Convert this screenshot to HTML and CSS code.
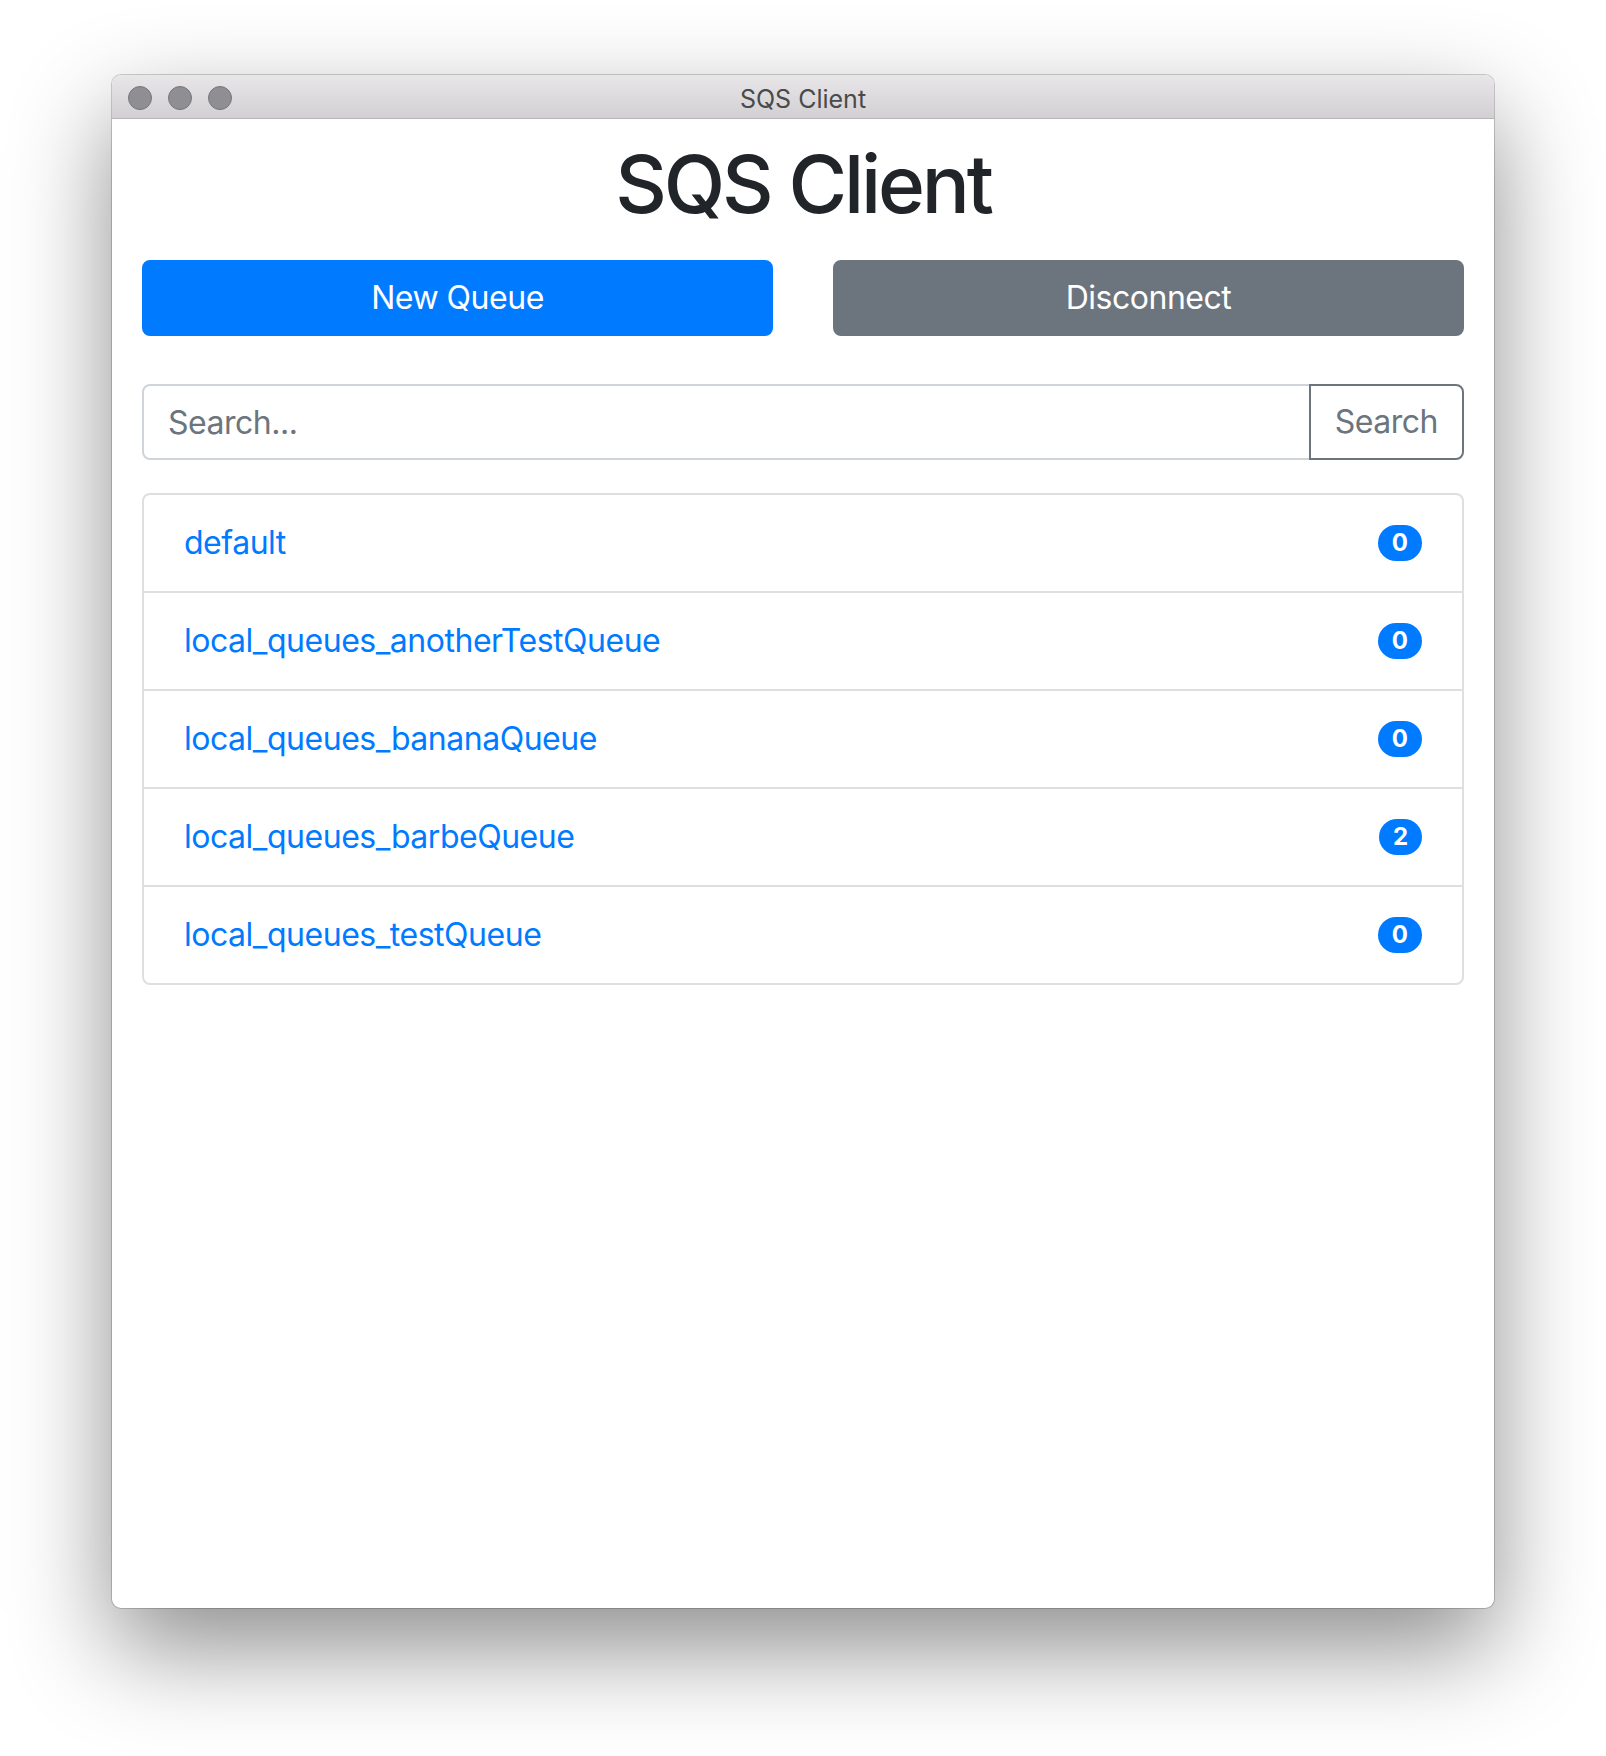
FILE: index.html
```html
<!DOCTYPE html>
<html lang="en">
<head>
    <meta charset="UTF-8">
    <meta name="viewport" content="width=device-width, initial-scale=1.0">
    <title>SQS Client</title>
    <link rel="stylesheet" href="styles.css">
</head>
<body>
    <div class="desktop">
        <div class="window">
            <div class="titlebar">
                <div class="lights">
                    <span class="light"></span>
                    <span class="light"></span>
                    <span class="light"></span>
                </div>
                <div class="window-title">SQS Client</div>
                <div></div>
            </div>
            <div class="content">
                <h1 class="heading">SQS Client</h1>
                <div class="actions">
                    <button class="btn btn-primary">New Queue</button>
                    <button class="btn btn-secondary">Disconnect</button>
                </div>
                <form class="search" onsubmit="return false">
                    <input type="text" class="search-input" placeholder="Search...">
                    <button class="search-btn">Search</button>
                </form>
                <ul class="queues">
                    <li class="queue"><a href="#">default</a><span class="badge">0</span></li>
                    <li class="queue"><a href="#">local_queues_anotherTestQueue</a><span class="badge">0</span></li>
                    <li class="queue"><a href="#">local_queues_bananaQueue</a><span class="badge">0</span></li>
                    <li class="queue"><a href="#">local_queues_barbeQueue</a><span class="badge">2</span></li>
                    <li class="queue"><a href="#">local_queues_testQueue</a><span class="badge">0</span></li>
                </ul>
            </div>
        </div>
    </div>
</body>
</html>
```

FILE: styles.css
```css
body {
    margin: 0;
    background: #ffffff;
    font-family: 'Inter', 'Noto Sans', sans-serif;
    color: #212529;
}
.desktop {
    padding: 75px 112px 148px;
}
.window {
    width: 1382px;
    height: 1533px;
    background: #ffffff;
    border-radius: 9px;
    overflow: hidden;
    display: flex;
    flex-direction: column;
    box-shadow: 0 40px 100px rgba(0, 0, 0, 0.45), 0 0 0 1px rgba(0, 0, 0, 0.18);
}
.titlebar {
    height: 43px;
    flex-shrink: 0;
    display: grid;
    grid-template-columns: 1fr auto 1fr;
    align-items: center;
    background: linear-gradient(#e8e6e8, #d2d0d2);
    border-bottom: 1px solid #b6b4b6;
}
.lights {
    display: flex;
    gap: 16px;
    padding: 2px 0 0 16px;
}
.light {
    width: 22px;
    height: 22px;
    border-radius: 50%;
    background: #8f8e93;
    border: 1px solid #77767b;
}
.window-title {
    font-size: 25px;
    color: #4a4a4a;
    padding-top: 4px;
}
.content {
    padding: 17px 30px 0;
    letter-spacing: -0.03em;
}
.heading {
    margin: 0 0 28px;
    font-size: 80px;
    font-weight: 500;
    line-height: 96px;
    text-align: center;
    letter-spacing: -3.2px;
}
.actions {
    display: grid;
    grid-template-columns: 1fr 1fr;
    gap: 60px;
}
.btn {
    height: 76px;
    padding: 12px 24px;
    font-family: inherit;
    font-size: 32px;
    line-height: 48px;
    letter-spacing: inherit;
    border: 2px solid transparent;
    border-radius: 8px;
    color: #ffffff;
    cursor: pointer;
}
.btn-primary {
    background: #007bff;
    border-color: #007bff;
}
.btn-secondary {
    background: #6c757d;
    border-color: #6c757d;
}
.search {
    display: flex;
    margin: 48px 0 0;
}
.search-input {
    flex: 1;
    min-width: 0;
    height: 76px;
    box-sizing: border-box;
    padding: 12px 24px;
    font-family: inherit;
    font-size: 32px;
    letter-spacing: inherit;
    color: #495057;
    border: 2px solid #ced4da;
    border-radius: 8px 0 0 8px;
    outline: none;
}
.search-input::placeholder {
    color: #6c757d;
}
.search-btn {
    height: 76px;
    margin-left: -2px;
    padding: 12px 24px;
    font-family: inherit;
    font-size: 32px;
    line-height: 48px;
    letter-spacing: inherit;
    color: #6c757d;
    background: #ffffff;
    border: 2px solid #6c757d;
    border-radius: 0 8px 8px 0;
    cursor: pointer;
}
.queues {
    list-style: none;
    margin: 33px 0 0;
    padding: 0;
}
.queue {
    display: flex;
    justify-content: space-between;
    align-items: center;
    padding: 24px 40px;
    line-height: 48px;
    font-size: 32px;
    border: 2px solid #dfdfdf;
    margin-bottom: -2px;
}
.queue:first-child {
    border-radius: 8px 8px 0 0;
}
.queue:last-child {
    border-radius: 0 0 8px 8px;
    margin-bottom: 0;
}
.queue a {
    color: #007bff;
    text-decoration: none;
}
.badge {
    padding: 6px 14px;
    font-size: 24px;
    font-weight: 700;
    line-height: 1;
    letter-spacing: 0;
    color: #ffffff;
    background: #007bff;
    border-radius: 999px;
}
```
